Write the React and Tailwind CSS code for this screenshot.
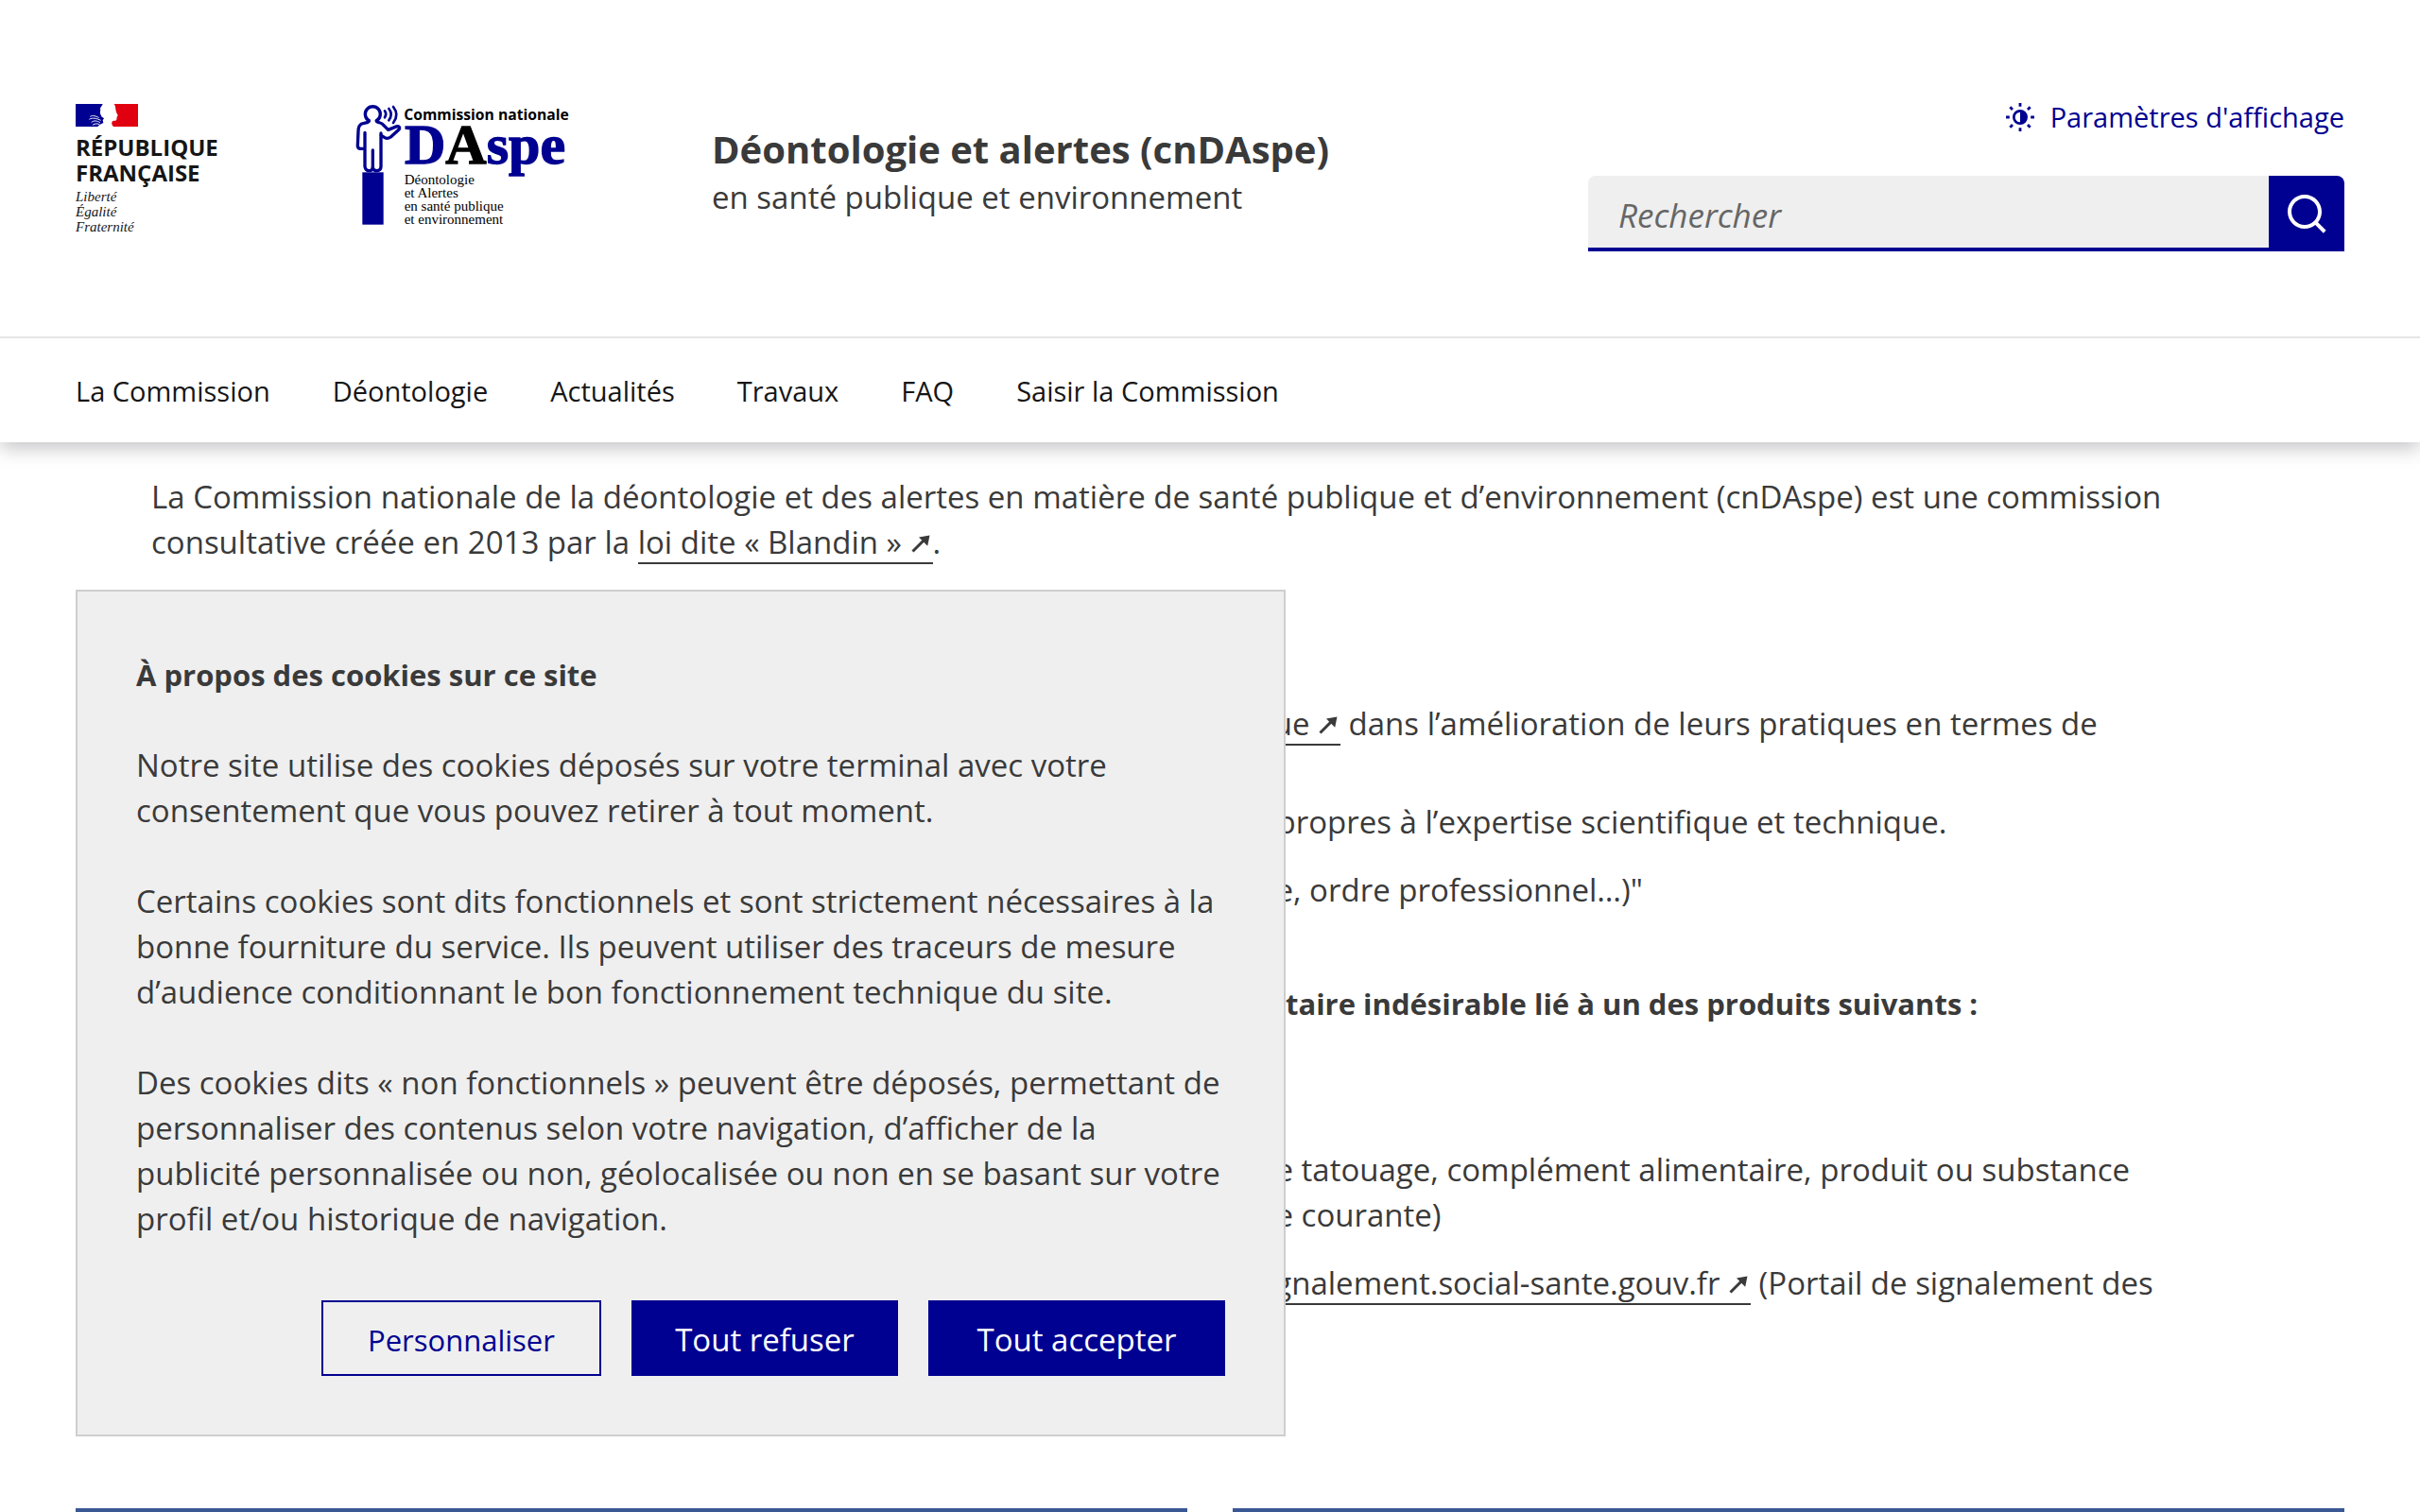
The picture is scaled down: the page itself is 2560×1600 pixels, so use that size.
import React from 'react';

const NAV = ['La Commission', 'Déontologie', 'Actualités', 'Travaux', 'FAQ', 'Saisir la Commission'];

function ArrowOut() {
  return (
    <svg viewBox="0 0 24 20" className="inline-block h-5 w-6 align-baseline" fill="none" aria-hidden="true">
      <path d="M2.5 17.5 15 5" stroke="#3a3a3a" strokeWidth="3" />
      <path d="M20.5 .4 9 2.6 18.2 11.8Z" fill="#3a3a3a" />
    </svg>
  );
}

function ExtLink({ children }) {
  return (
    <a href="#" className="inline-block border-b-2 border-[#3a3a3a] leading-[42px]">
      {children} <ArrowOut />
    </a>
  );
}

function StateLogo() {
  return (
    <a href="#" className="block w-[296px] shrink-0 pt-[11px] text-[#161616]">
      <svg viewBox="60 60 198 72" className="block h-6 w-[66px]" aria-hidden="true">
        <rect x="60" y="60" width="100" height="72" fill="#000091" />
        <rect x="160" y="60" width="98" height="72" fill="#e1000f" />
        <path d="M146 60H182C188 68 186 78 189 86L194 96C194 99 191 99 191 102C190 106 191 108 189 112C184 115 178 112 176 116C173 121 175 126 180 132H130L136 126L148 120L146 112L150 106L142 100L138 90C136 84 141 82 138 76C138 70 144 66 146 60Z" fill="#fff" />
        <path d="M106 100C114 95 124 98 134 104M103 109C114 102 126 106 140 112M110 119C118 111 128 113 138 120M114 127C122 121 130 122 136 126" stroke="#fff" strokeWidth="2.8" fill="none" />
      </svg>
      <span className="mt-2 block text-[24px] leading-[27px] font-bold">
        RÉPUBLIQUE
        <br />
        FRANÇAISE
      </span>
      <span className="mt-1 block font-['Liberation_Serif',serif] text-[15px] leading-4 italic">
        Liberté
        <br />
        Égalité
        <br />
        Fraternité
      </span>
    </a>
  );
}

function CommissionLogo() {
  return (
    <a href="#" className="block w-[377px] shrink-0 pt-[11px]" aria-label="Accueil cnDAspe">
      <svg viewBox="48 45 690 390" className="block h-[130px] w-[230px]">
        <g fill="none" stroke="#000091" strokeWidth="10" strokeLinecap="round" strokeLinejoin="round">
          <path d="M91 98A24 24 0 1 1 115 98" />
          <path d="M91 98C91 106 76 104 66 109C58 114 57 122 57 132L55 178Q55 187 64 187H72" />
          <path d="M78 136V244Q80 257 91 257Q102 257 103 247V192" />
          <path d="M103 247Q105 257 116 257Q129 256 129 244V138" />
          <path d="M115 98C115 105 128 103 134 109L152 127L180 116Q191 116 187 125L160 150Q150 157 141 152L130 145" />
          <path d="M141 67Q148 77 141 88M154 60Q168 77 154 97M168 54Q188 79 168 105" strokeWidth="8" />
        </g>
        <rect x="70" y="262" width="67" height="166" fill="#000091" />
        <text x="202" y="95" fontSize="47" fontWeight="700" fontFamily="'Open Sans', sans-serif">Commission nationale</text>
        <text x="204" y="235" fontSize="180" fontWeight="700" fontFamily="'Liberation Serif', serif" fill="#000091" stroke="#000091" strokeWidth="4">
          D<tspan fill="#000" stroke="#000">A</tspan>spe
        </text>
        <g fontSize="45" fontFamily="'Liberation Serif', serif">
          <text x="203" y="300">Déontologie</text>
          <text x="203" y="342">et Alertes</text>
          <text x="203" y="384">en santé publique</text>
          <text x="203" y="426">et environnement</text>
        </g>
      </svg>
    </a>
  );
}

function DisplayIcon() {
  return (
    <svg viewBox="0 0 24 24" className="h-8 w-8" fill="none" aria-hidden="true">
      <circle cx="12" cy="12" r="5" stroke="#000091" strokeWidth="2" />
      <path d="M12 7a5 5 0 0 1 0 10z" fill="#000091" />
      <path d="M12 .8v2.8M12 20.4v2.8M.8 12h2.8M20.4 12h2.8M4 4l2 2M18 18l2 2M4 20l2-2M18 6l2-2" stroke="#000091" strokeWidth="2.1" />
    </svg>
  );
}

function SearchIcon() {
  return (
    <svg viewBox="0 0 24 24" className="h-12 w-12" fill="#fff" aria-hidden="true">
      <path d="M18.031 16.617l4.283 4.282-1.415 1.415-4.282-4.283A8.96 8.96 0 0 1 11 20c-4.968 0-9-4.032-9-9s4.032-9 9-9 9 4.032 9 9a8.96 8.96 0 0 1-1.969 5.617zm-2.006-.742A6.977 6.977 0 0 0 18 11c0-3.868-3.133-7-7-7-3.868 0-7 3.132-7 7 0 3.867 3.132 7 7 7a6.977 6.977 0 0 0 4.875-1.975l.15-.15z" />
    </svg>
  );
}

function Header() {
  return (
    <header className="relative bg-white shadow-[0_6px_20px_rgba(0,0,18,0.24)]">
      <div className="flex items-start border-b-2 border-[#e5e5e5] px-20 pt-[99px] pb-[90px]">
        <StateLogo />
        <CommissionLogo />
        <a href="#" className="mt-[34px] block whitespace-nowrap">
          <span className="block text-[40px] leading-[50px] font-bold">Déontologie et alertes (cnDAspe)</span>
          <span className="block leading-[52px]">en santé publique et environnement</span>
        </a>
        <div className="ml-auto flex w-[800px] flex-col gap-[37px]">
          <button type="button" className="flex items-center gap-4 self-end text-[29px] leading-[50px] text-[#000091]">
            <DisplayIcon />
            Paramètres d'affichage
          </button>
          <form role="search" className="flex h-20 overflow-hidden rounded-t-lg">
            <input
              type="search"
              aria-label="Rechercher"
              placeholder="Rechercher"
              className="min-w-0 flex-1 border-b-4 border-[#000091] bg-[#efefef] px-8 pt-2 text-[35px] outline-none placeholder:text-[#666666] placeholder:italic"
            />
            <button type="button" aria-label="Lancer la recherche" className="flex w-20 items-center justify-center bg-[#000091]">
              <SearchIcon />
            </button>
          </form>
        </div>
      </div>
      <nav aria-label="Menu principal" className="px-20 pt-8 pb-[30px]">
        <ul className="flex gap-[66px] text-[29px] leading-[48px] text-[#161616]">
          {NAV.map((n) => (
            <li key={n}>
              <a href="#">{n}</a>
            </li>
          ))}
        </ul>
      </nav>
    </header>
  );
}

function Content() {
  return (
    <main className="pt-[34px]">
      <div className="px-40 whitespace-nowrap">
        <p>
          La Commission nationale de la déontologie et des alertes en matière de santé publique et d’environnement (cnDAspe) est une commission
          <br />
          consultative créée en 2013 par la <ExtLink>loi dite « Blandin »</ExtLink>.
        </p>
        <ul className="mt-36">
          <li>
            <span className="inline-block w-[1258px] text-right">
              <ExtLink>publique</ExtLink>
            </span>{' '}
            dans l’amélioration de leurs pratiques en termes de
          </li>
          <li className="mt-14">
            <span className="inline-block w-[1182px]" /> propres à l’expertise scientifique et technique.
          </li>
          <li className="mt-6">
            <span className="inline-block w-[1208px] text-right">organisme</span>, ordre professionnel…)"
          </li>
        </ul>
        <p className="mt-[72px] text-[31px] font-bold">
          <span className="inline-block w-[1274px] text-right">sanitaire</span> indésirable lié à un des produits suivants :
        </p>
        <ul className="mt-32">
          <li>
            <span className="inline-block w-[1208px] text-right">de</span> tatouage, complément alimentaire, produit ou substance
            <br />
            <span className="inline-block w-[1208px] text-right">vie</span> courante)
          </li>
          <li className="mt-6">
            <span className="inline-block w-[1692px] text-right">
              <ExtLink>signalement.social-sante.gouv.fr</ExtLink>
            </span>{' '}
            (Portail de signalement des
          </li>
        </ul>
      </div>
      <div className="mt-[214px] grid grid-cols-2 gap-12 px-20">
        <div className="h-1 bg-[#3a5893]" />
        <div className="h-1 bg-[#3a5893]" />
      </div>
    </main>
  );
}

function CookieDialog() {
  return (
    <section
      role="dialog"
      aria-labelledby="cookie-title"
      className="fixed bottom-20 left-20 w-[1280px] border-2 border-[#cecece] bg-[#efefef] px-[62px] pt-16 pb-[62px] whitespace-nowrap"
    >
      <h2 id="cookie-title" className="text-[31px] leading-[48px] font-bold">
        À propos des cookies sur ce site
      </h2>
      <p className="mt-12">
        Notre site utilise des cookies déposés sur votre terminal avec votre
        <br />
        consentement que vous pouvez retirer à tout moment.
      </p>
      <p className="mt-12">
        Certains cookies sont dits fonctionnels et sont strictement nécessaires à la
        <br />
        bonne fourniture du service. Ils peuvent utiliser des traceurs de mesure
        <br />
        d’audience conditionnant le bon fonctionnement technique du site.
      </p>
      <p className="mt-12">
        Des cookies dits « non fonctionnels » peuvent être déposés, permettant de
        <br />
        personnaliser des contenus selon votre navigation, d’afficher de la
        <br />
        publicité personnalisée ou non, géolocalisée ou non en se basant sur votre
        <br />
        profil et/ou historique de navigation.
      </p>
      <div className="mt-[62px] flex justify-end gap-8 text-[33px]">
        <button type="button" className="h-20 w-[296px] border-2 border-[#000091] pt-1 text-[31px] text-[#000091]">
          Personnaliser
        </button>
        <button type="button" className="h-20 w-[282px] bg-[#000091] pt-1 text-white">
          Tout refuser
        </button>
        <button type="button" className="h-20 w-[314px] bg-[#000091] pt-1 text-white">
          Tout accepter
        </button>
      </div>
    </section>
  );
}

export default function App() {
  return (
    <div className="overflow-hidden bg-white font-['Open_Sans',sans-serif] text-[33px] leading-[48px] text-[#3a3a3a]">
      <Header />
      <Content />
      <CookieDialog />
    </div>
  );
}
